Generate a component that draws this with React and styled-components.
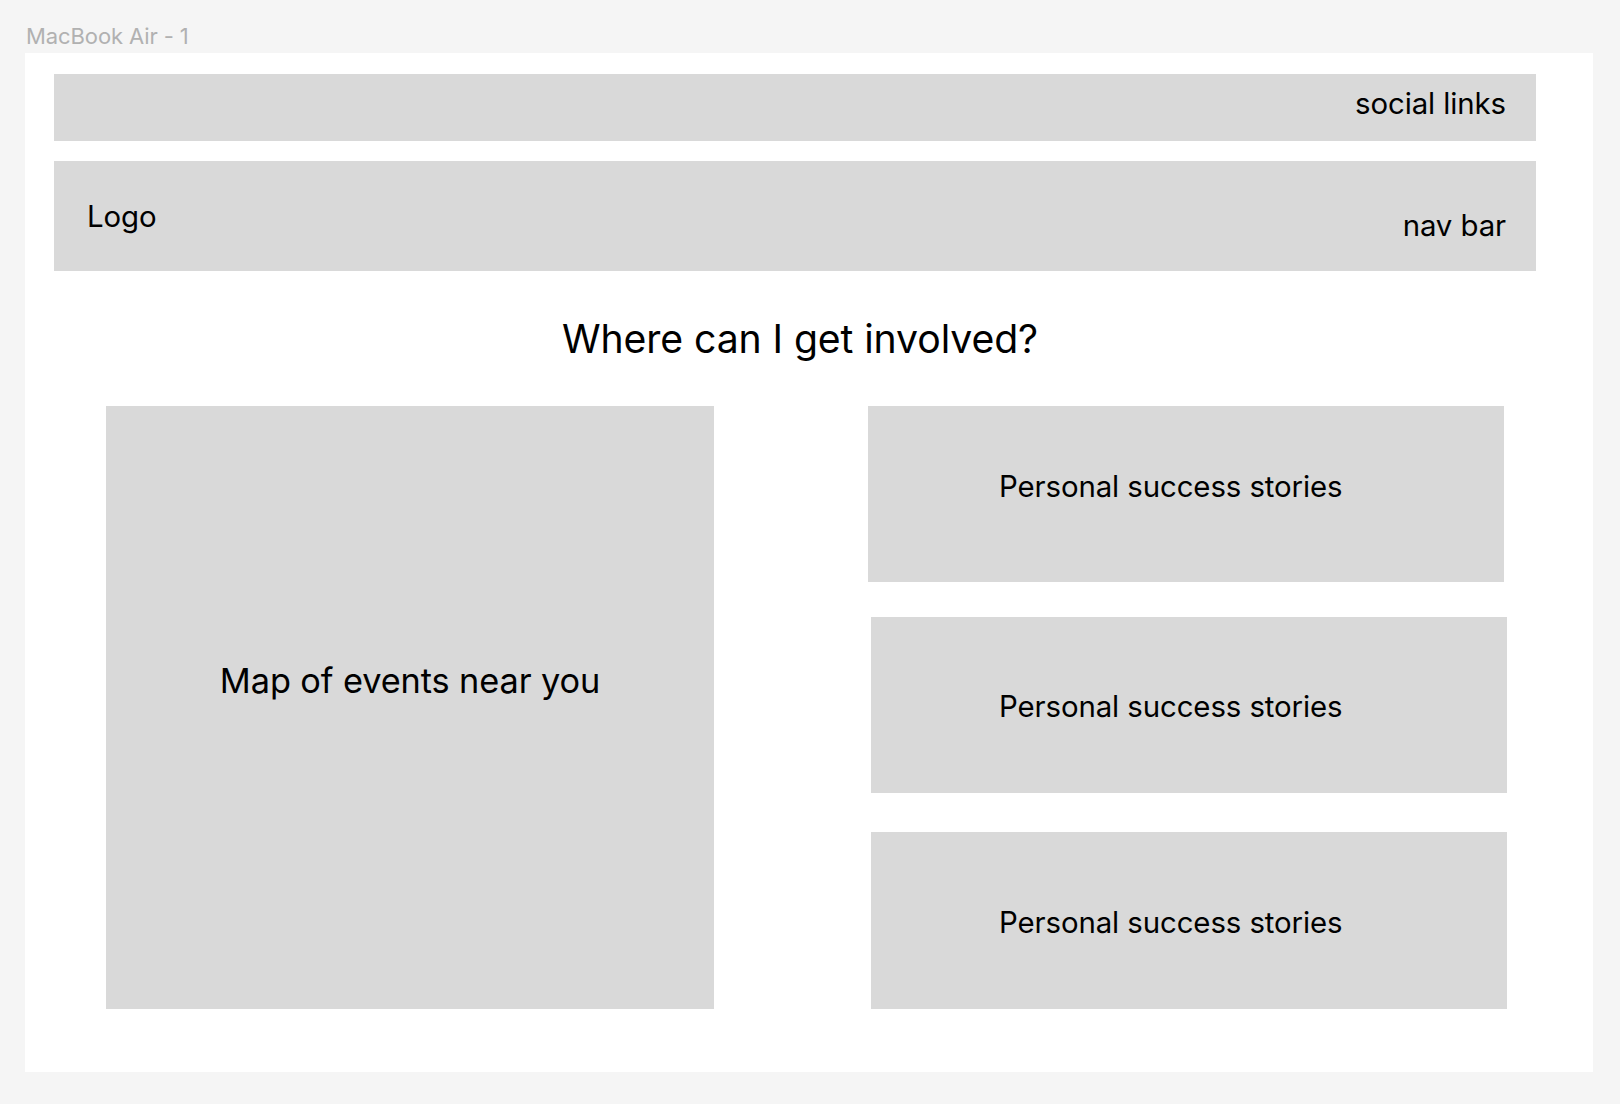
import React from 'react'
import styled, { createGlobalStyle } from 'styled-components'

const GlobalStyle = createGlobalStyle`
  html, body {
    margin: 0;
    padding: 0;
    background: #f5f5f5;
  }
  body {
    font-family: 'Inter', 'Liberation Sans', sans-serif;
    color: #000;
    letter-spacing: -0.1px;
  }
`

const Canvas = styled.div`
  min-height: 1104px;
  padding: 23px 0 0 25px;
  box-sizing: border-box;
`

const FrameLabel = styled.div`
  font-size: 22px;
  line-height: 1.21;
  color: #b1b1b1;
  padding-left: 1px;
  margin-bottom: 3px;
`

const Frame = styled.div`
  width: 1568px;
  height: 1019px;
  background: #ffffff;
  box-sizing: border-box;
  padding: 21px 57px 0 29px;
`

const Bar = styled.div`
  background: #d9d9d9;
  height: ${p => p.$height}px;
  margin-top: ${p => p.$gap || 0}px;
  display: flex;
  justify-content: space-between;
  align-items: flex-start;
  padding: 0 30px 0 33px;
  box-sizing: border-box;
`

// text placed inside a bar, its offset from the bar top varies
const BarText = styled.span`
  font-size: 29.4px;
  line-height: 1.21;
  margin-top: ${p => p.$top}px;
  margin-left: ${p => (p.$right ? 'auto' : '0')};
`

const Heading = styled.h1`
  margin: 44px 0 0;
  padding-left: 10px;
  font-size: 39.2px;
  font-weight: 400;
  line-height: 1.21;
  text-align: center;
`

const Content = styled.div`
  display: flex;
  align-items: flex-start;
  margin-top: 44px;
  padding-left: 52px;
`

const MapBox = styled.div`
  width: 608px;
  height: 603px;
  background: #d9d9d9;
  padding-top: 254px;
  box-sizing: border-box;
  text-align: center;
  font-size: 34.3px;
  line-height: 1.21;
`

const Stories = styled.div`
  display: flex;
  flex-direction: column;
  margin-left: 154px;
`

const StoryCard = styled.div`
  width: 636px;
  height: ${p => p.$height}px;
  margin-top: ${p => p.$gap}px;
  margin-left: ${p => p.$shift}px;
  background: #d9d9d9;
  box-sizing: border-box;
  padding-top: ${p => p.$textTop}px;
  padding-left: ${p => 131 - p.$shift}px;
  font-size: 29.4px;
  line-height: 1.21;
`

const stories = [
  { gap: 0, shift: 0, height: 176, textTop: 63 },
  { gap: 35, shift: 3, height: 176, textTop: 72 },
  { gap: 39, shift: 3, height: 177, textTop: 73 },
]

const App = () => {
  return (
    <Canvas>
      <GlobalStyle />
      <FrameLabel>MacBook Air - 1</FrameLabel>
      <Frame>
        <Bar $height={67}>
          <BarText $top={12.5} $right>social links</BarText>
        </Bar>
        <Bar $height={110} $gap={20}>
          <BarText $top={38.5}>Logo</BarText>
          <BarText $top={47.5} $right>nav bar</BarText>
        </Bar>
        <Heading>Where can I get involved?</Heading>
        <Content>
          <MapBox>Map of events near you</MapBox>
          <Stories>
            {stories.map((s, i) => (
              <StoryCard
                key={i}
                $gap={s.gap}
                $shift={s.shift}
                $height={s.height}
                $textTop={s.textTop}
              >
                Personal success stories
              </StoryCard>
            ))}
          </Stories>
        </Content>
      </Frame>
    </Canvas>
  )
}

export default App
